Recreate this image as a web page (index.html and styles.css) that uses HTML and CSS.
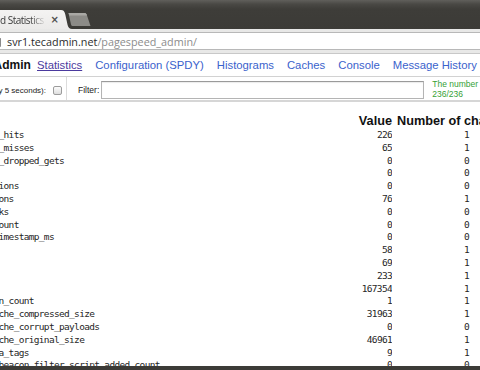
FILE: index.html
```html
<!DOCTYPE html>
<html>
<head>
<meta charset="utf-8">
<title>PageSpeed Statistics</title>
<link rel="stylesheet" href="styles.css">
</head>
<body>
<div class="window">
  <div class="titlebar">
    <div class="tab">
      <span class="tab-title">PageSpeed Statistics</span>
      <span class="tab-close">×</span>
    </div>
    <svg class="tab-edge" width="12" height="19" viewBox="0 0 12 19">
      <defs><linearGradient id="tg" x1="0" y1="0" x2="0" y2="1"><stop offset="0" stop-color="#f4f3f2"/><stop offset="1" stop-color="#ebeae9"/></linearGradient></defs>
      <path d="M0 0 H1 C3.5 0 4.6 1.4 5.3 4.5 L7.6 15 C8.3 17.8 9.6 19 12 19 H0 Z" fill="url(#tg)"/>
    </svg>
    <svg class="newtab" width="24" height="13" viewBox="0 0 24 13">
      <path d="M1.5 0 H17.5 C18.6 0 19.3 0.6 19.7 1.6 L23.5 13 H6 C5 13 4.4 12.4 4 11.4 Z" fill="#8c8b87"/>
      <path d="M1.5 0 H17.5 C18.6 0 19.3 0.6 19.7 1.6 L20 2.5 H2.3 Z" fill="#a9a8a4"/>
    </svg>
  </div>
  <div class="toolbar">
    <div class="urlbar">
      <svg class="page-icon" width="14" height="14" viewBox="0 0 14 14">
        <path d="M3 1.5 H8.5 L11.5 4.5 V12.5 H3 Z" fill="#f4f4f4" stroke="#8a8a8a" stroke-width="1"/>
        <path d="M8.5 1.5 V4.5 H11.5" fill="none" stroke="#8a8a8a" stroke-width="1"/>
      </svg>
      <span class="host">svr1.tecadmin.net</span><span class="path">/pagespeed_admin/</span>
    </div>
  </div>
  <div class="viewport">
    <div class="page">
      <div class="nav">
        <span class="brand">PageSpeed Admin</span>
        <a class="nav-link current" href="#">Statistics</a>
        <a class="nav-link" href="#">Configuration (SPDY)</a>
        <a class="nav-link" href="#">Histograms</a>
        <a class="nav-link" href="#">Caches</a>
        <a class="nav-link" href="#">Console</a>
        <a class="nav-link" href="#">Message History</a>
      </div>
      <div class="filterbar">
        <div class="refresh">
          <span class="refresh-label">Auto refresh (every 5 seconds):</span>
          <input class="check" type="checkbox">
        </div>
        <label class="filter-label">Filter:</label>
        <input class="filter-input" type="text">
        <div class="count">The number of statistics shown:<br>236/236</div>
      </div>
      <table class="stats">
        <colgroup><col class="c-name"><col class="c-value"><col class="c-changes"></colgroup>
        <thead>
          <tr><th class="name"></th><th class="value">Value</th><th class="changes">Number of changes</th></tr>
        </thead>
        <tbody>
          <tr><td>cache_backend_hits</td><td class="value">226</td><td class="changes">1</td></tr>
          <tr><td>cache_backend_misses</td><td class="value">65</td><td class="changes">1</td></tr>
          <tr><td>cache_batcher_dropped_gets</td><td class="value">0</td><td class="changes">0</td></tr>
          <tr><td>cache_deletes</td><td class="value">0</td><td class="changes">0</td></tr>
          <tr><td>cache_expirations</td><td class="value">0</td><td class="changes">0</td></tr>
          <tr><td>cache_extensions</td><td class="value">76</td><td class="changes">1</td></tr>
          <tr><td>cache_fallbacks</td><td class="value">0</td><td class="changes">0</td></tr>
          <tr><td>cache_flush_count</td><td class="value">0</td><td class="changes">0</td></tr>
          <tr><td>cache_flush_timestamp_ms</td><td class="value">0</td><td class="changes">0</td></tr>
          <tr><td>cache_hits</td><td class="value">58</td><td class="changes">1</td></tr>
          <tr><td>cache_inserts</td><td class="value">69</td><td class="changes">1</td></tr>
          <tr><td>cache_misses</td><td class="value">233</td><td class="changes">1</td></tr>
          <tr><td>cache_time_us</td><td class="value">167354</td><td class="changes">1</td></tr>
          <tr><td>child_shutdown_count</td><td class="value">1</td><td class="changes">1</td></tr>
          <tr><td>compressed_cache_compressed_size</td><td class="value">31963</td><td class="changes">1</td></tr>
          <tr><td>compressed_cache_corrupt_payloads</td><td class="value">0</td><td class="changes">0</td></tr>
          <tr><td>compressed_cache_original_size</td><td class="value">46961</td><td class="changes">1</td></tr>
          <tr><td>converted_meta_tags</td><td class="value">9</td><td class="changes">1</td></tr>
          <tr><td>critical_css_beacon_filter_script_added_count</td><td class="value">0</td><td class="changes">0</td></tr>
        </tbody>
      </table>
    </div>
  </div>
  <div class="bottombar"></div>
</div>
</body>
</html>
```
FILE: styles.css
```css
html, body {
  margin: 0;
  padding: 0;
}
body {
  width: 480px;
  height: 370px;
  overflow: hidden;
  background: #ffffff;
  font-family: "Liberation Sans", Arial, sans-serif;
}
.window {
  display: flex;
  flex-direction: column;
  height: 370px;
}

/* title bar + tabs */
.titlebar {
  flex: none;
  height: 29px;
  display: flex;
  align-items: flex-end;
  overflow: hidden;
  background: linear-gradient(#605f5b 0, #4a4945 4px, #3e3d39 9px, #3c3b37 100%);
}
.tab {
  flex: none;
  height: 19px;
  width: 120px;
  margin-left: -60px;
  padding-left: 18.5px;
  box-sizing: border-box;
  display: flex;
  align-items: center;
  background: linear-gradient(#f4f3f2, #ebeae9);
  border-top-left-radius: 4px;
  font-family: "Open Sans", "DejaVu Sans", sans-serif;
  font-size: 10px;
  letter-spacing: -0.5px;
  color: #3a3a3a;
}
.tab-title {
  flex: none;
  width: 87px;
  overflow: hidden;
  white-space: nowrap;
  -webkit-mask-image: linear-gradient(to right, #000 82%, transparent);
  mask-image: linear-gradient(to right, #000 82%, transparent);
}
.tab-close {
  margin-left: 5px;
  font-family: "DejaVu Sans", sans-serif;
  font-size: 10px;
  font-weight: bold;
  letter-spacing: 0;
  color: #505050;
}
.tab-edge {
  flex: none;
  display: block;
}
.newtab {
  flex: none;
  display: block;
  margin-left: -5px;
  margin-bottom: 3px;
}

/* toolbar */
.toolbar {
  flex: none;
  height: 25px;
  box-sizing: border-box;
  padding-top: 3px;
  background: #e8e8e7;
  border-bottom: 1px solid #c8c8c8;
}
.urlbar {
  height: 18px;
  box-sizing: border-box;
  margin-left: -12px;
  margin-right: -10px;
  background: #ffffff;
  border: 1px solid #b8b8b8;
  border-radius: 3px;
  display: flex;
  align-items: center;
  font-family: "Open Sans", "DejaVu Sans", sans-serif;
  font-size: 10.8px;
  white-space: nowrap;
}
.page-icon {
  flex: none;
  display: block;
  margin-right: 4px;
}
.host {
  color: #2b2b2b;
}
.path {
  color: #8c8c8c;
}

/* page */
.viewport {
  flex: 1;
  overflow: hidden;
  background: #ffffff;
}
.bottombar {
  flex: none;
  height: 4px;
  background: #3c3b37;
}
.page {
  width: 720px;
  margin-left: -74px;
}
.nav {
  height: 23px;
  box-sizing: border-box;
  border-bottom: 1px solid #d2d2d2;
  display: flex;
  align-items: center;
  gap: 13px;
  font-size: 11.3px;
  white-space: nowrap;
}
.brand {
  flex: none;
  width: 98px;
  text-align: right;
  font-weight: bold;
  font-size: 12px;
  color: #111;
}
.nav-link {
  color: #3a62cc;
  text-decoration: none;
}
.nav-link.current {
  color: #4b3a9e;
  text-decoration: underline;
}

.filterbar {
  height: 25px;
  box-sizing: border-box;
  border-bottom: 2px solid #d6d6d6;
  display: flex;
  font-size: 8.5px;
  color: #222;
  white-space: nowrap;
}
.refresh {
  flex: none;
  width: 141px;
  box-sizing: border-box;
  display: flex;
  justify-content: flex-end;
  align-items: center;
  padding: 3px 4px 0 0;
  border-right: 1px solid #dcdcdc;
}
.refresh-label {
  margin-right: 7px;
  font-size: 8px;
}
.check {
  -webkit-appearance: none;
  appearance: none;
  margin: 0;
  width: 9px;
  height: 9px;
  box-sizing: border-box;
  border: 1px solid #9c9c9c;
  border-radius: 2px;
  background: linear-gradient(#fcfcfc, #dedede);
}
.filter-label {
  display: flex;
  align-items: center;
  padding: 3px 0 0 11px;
}
.filter-input {
  align-self: center;
  margin: 3px 0 0 2px;
  width: 323px;
  height: 18px;
  box-sizing: border-box;
  padding: 0;
  border: 1px solid #b4b4b4;
  border-top-color: #9a9a9a;
  box-shadow: inset 0 1px 1px rgba(0,0,0,0.08);
  background: #ffffff;
}
.count {
  align-self: center;
  margin: 2px 0 0 8px;
  color: #35a135;
  line-height: 9.6px;
}

.stats {
  margin: 12px 0 0 7px;
  border-collapse: collapse;
  table-layout: fixed;
  width: 640px;
}
.c-name { width: 399px; }
.c-value { width: 60px; }
.stats th {
  padding: 0;
  height: 15px;
  line-height: 15px;
  font-size: 12.7px;
  font-weight: bold;
  color: #111;
  white-space: nowrap;
}
.stats th.value { text-align: right; }
.stats th.changes { text-align: left; padding-left: 5px; }
.stats td {
  padding: 0;
  height: 12.8px;
  line-height: 12.8px;
  font-family: "DejaVu Sans Mono", monospace;
  font-size: 9.5px;
  letter-spacing: -0.68px;
  color: #262626;
  white-space: nowrap;
  overflow: hidden;
}
.stats td.value { text-align: right; }
.stats td.changes { padding-left: 72px; }
```
